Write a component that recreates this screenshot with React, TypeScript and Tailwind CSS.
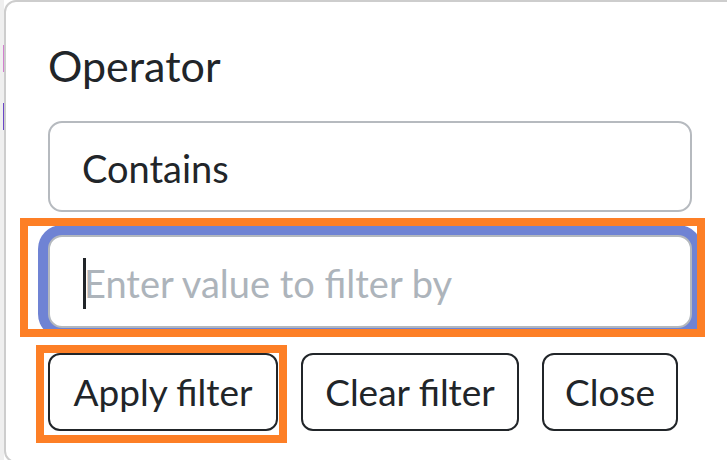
export default function App() {
  return (
    <div className="w-[727px] h-[460px] overflow-hidden bg-white flex font-['Lato',sans-serif] text-[#212529]">
      {/* page behind the popover */}
      <div className="w-[4px] shrink-0 h-full bg-[#efefef] flex flex-col items-end">
        <div className="h-[45px] shrink-0" />
        <div className="h-[27px] w-[1px] shrink-0 bg-[#d27fcf]" />
        <div className="h-[31px] shrink-0" />
        <div className="h-[27px] w-[1px] shrink-0 bg-[#6b45c8]" />
      </div>

      <div className="w-[740px] h-[463px] shrink-0 bg-white border-2 border-[#cdcdcd] rounded-[12px] pl-[42px] pt-[38px]">
        <div className="w-[644px] flex flex-col">
          <label className="h-[52px] text-[43px] leading-[52px]">Operator</label>

          <div className="mt-[29px] h-[91px] border-2 border-[#b6babf] rounded-[14px] pl-[32px] pt-[3px] flex items-center text-[38px] leading-[48px]">
            Contains
          </div>

          <div className="mt-[6px] -ml-[28px] -mr-[13px] border-[8px] border-[#fd7f26] overflow-hidden pl-[20px] pr-[5px] pt-[9px] pb-[1px]">
            <div className="h-[93px] border-2 border-[#b3b8be] rounded-[14px] shadow-[0_0_0_10px_#6f83d4] bg-white flex items-center pl-[33px] pt-[3px] text-[38px] leading-[48px]">
              <span className="w-[3px] h-[51px] bg-[#212529] shrink-0" />
              <span className="-ml-[2px] text-[#adb4bb]">Enter value to filter by</span>
            </div>
          </div>

          <div className="mt-[8px] flex items-start">
            <div className="-ml-[12px] border-[8px] border-t-[8px] border-[#fd7f26] pl-[4px] pr-[1px] pb-[4px]">
              <button className="w-[230px] h-[78px] border-2 border-[#212529] rounded-[12px] bg-white flex items-center justify-center text-[37px] leading-[46px]">
                Apply filter
              </button>
            </div>
            <button className="mt-[8px] ml-[14px] w-[218px] h-[78px] border-2 border-[#212529] rounded-[12px] bg-white flex items-center justify-center text-[37px] leading-[46px]">
              Clear filter
            </button>
            <button className="mt-[8px] ml-[23px] w-[136px] h-[78px] border-2 border-[#212529] rounded-[12px] bg-white flex items-center justify-center text-[37px] leading-[46px]">
              Close
            </button>
          </div>
        </div>
      </div>
    </div>
  )
}
